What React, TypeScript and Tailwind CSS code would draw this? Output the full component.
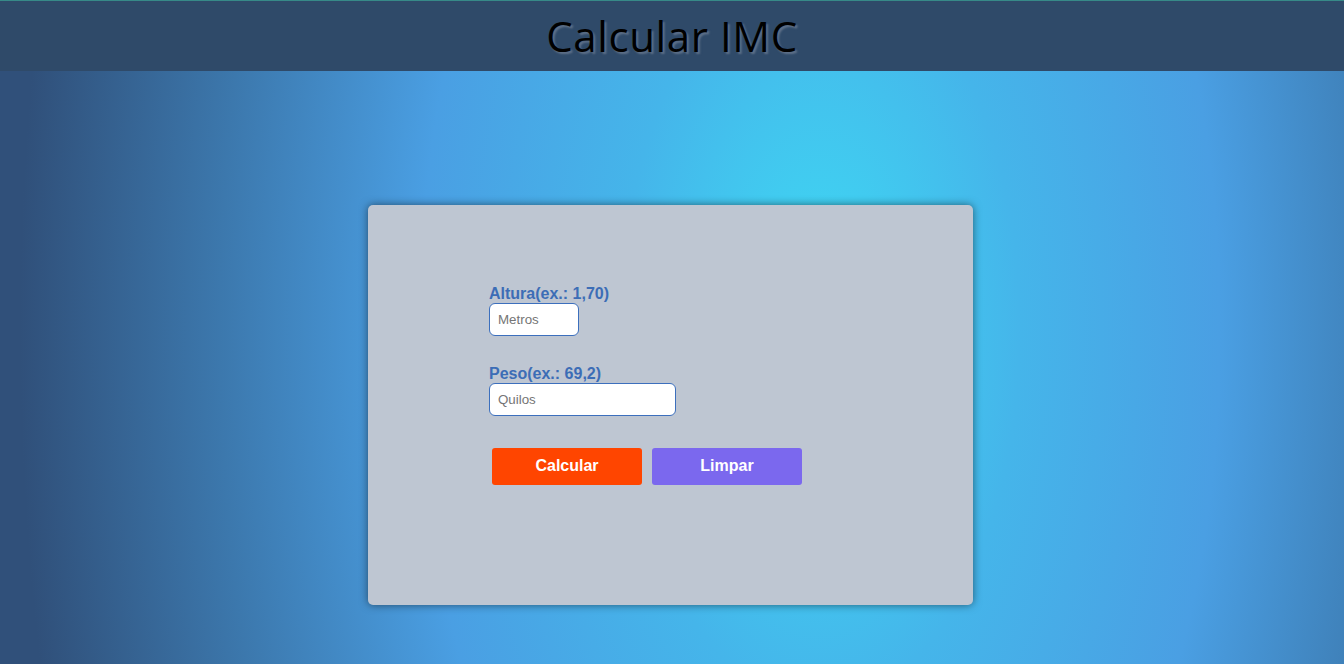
import { useState } from "react";

export default function App() {
  const [altura, setAltura] = useState("");
  const [peso, setPeso] = useState("");

  return (
    <div className="min-h-screen w-full flex flex-col bg-[radial-gradient(ellipse_800px_1500px_at_820px_330px,#3edbf4_0%,#45b5ea_25%,#4a9fe3_50%,#3c78ad_75%,#30507a_100%)] font-['Liberation_Sans',Arial,sans-serif]">
      {/* Header */}
      <header className="h-[71px] shrink-0 border-t border-[#378a88] bg-[#2f4a69] flex items-center justify-center">
        <h1 className="font-['Open_Sans',sans-serif] text-[42px] font-medium leading-none tracking-[0.6px] text-black [text-shadow:2px_2px_2px_#5f7189] -mt-[1px]">
          Calcular IMC
        </h1>
      </header>

      {/* Card */}
      <main className="flex justify-center pt-[134px] pr-[3px]">
        <div className="w-[605px] h-[400px] rounded-[5px] bg-[#bec6d2] shadow-[0_0_9px_rgba(0,0,0,0.5)] pt-[80px] pl-[121px]">
          <form className="flex flex-col" onSubmit={(e) => e.preventDefault()}>
            <label className="block text-[16px] font-bold leading-[18px] text-[#3c6db6]">
              Altura(ex.: 1,70)
            </label>
            <input
              value={altura}
              onChange={(e) => setAltura(e.target.value)}
              placeholder="Metros"
              className="w-[90px] h-[33px] rounded-[6px] border border-[#3c6fbd] bg-white px-[8px] text-[13.33px] text-[#333] placeholder:text-[#757575] outline-none"
            />

            <label className="mt-[29px] block text-[16px] font-bold leading-[18px] text-[#3c6db6]">
              Peso(ex.: 69,2)
            </label>
            <input
              value={peso}
              onChange={(e) => setPeso(e.target.value)}
              placeholder="Quilos"
              className="w-[187px] h-[33px] rounded-[6px] border border-[#3c6fbd] bg-white px-[8px] text-[13.33px] text-[#333] placeholder:text-[#757575] outline-none"
            />

            <div className="mt-[32px] ml-[3px] flex gap-[10px]">
              <button
                type="submit"
                className="w-[150px] h-[37px] rounded-[3px] bg-[#ff4500] text-white text-[16px] font-bold pb-[2px]"
              >
                Calcular
              </button>
              <button
                type="button"
                onClick={() => {
                  setAltura("");
                  setPeso("");
                }}
                className="w-[150px] h-[37px] rounded-[3px] bg-[#7b68ee] text-white text-[16px] font-bold pb-[2px]"
              >
                Limpar
              </button>
            </div>
          </form>
        </div>
      </main>
    </div>
  );
}
